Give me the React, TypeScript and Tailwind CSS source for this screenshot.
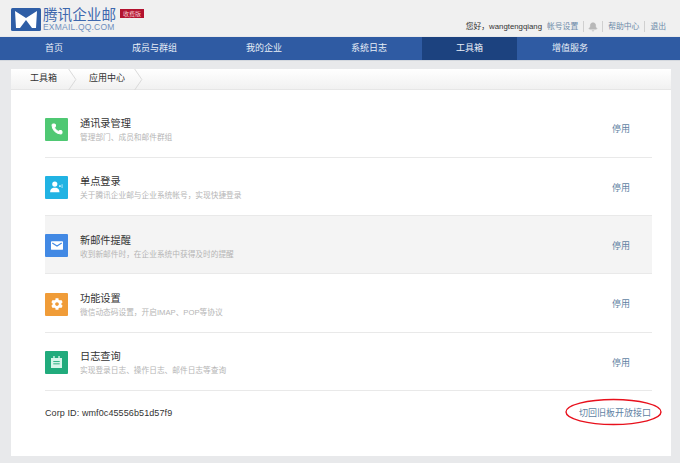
import { Bell, Phone } from "lucide-react";
import { FaCog } from "react-icons/fa";
import type { ReactNode } from "react";

const navItems = [
  { label: "首页", width: "w-[87px]", pad: "pl-[34px]" },
  { label: "成员与群组", width: "w-[114px]", pad: "pl-[34px]" },
  { label: "我的企业", width: "w-[105px]", pad: "pl-[34px]" },
  { label: "系统日志", width: "w-[105px]", pad: "pl-[34px]" },
  { label: "工具箱", width: "w-[95px]", pad: "pl-[34px]", active: true },
  { label: "增值服务", width: "w-[105px]", pad: "pl-[35px]" },
];

const tools: { title: string; desc: string; color: string; highlight?: boolean; icon: ReactNode }[] = [
  {
    title: "通讯录管理",
    desc: "管理部门、成员和邮件群组",
    color: "bg-[#4fc873]",
    icon: <Phone className="h-[12px] w-[12px] fill-white text-white" />,
  },
  {
    title: "单点登录",
    desc: "关于腾讯企业邮与企业系统帐号，实现快捷登录",
    color: "bg-[#21b3e3]",
    icon: (
      <svg viewBox="0 0 16 14" className="h-[12px] w-[15px]" fill="white">
        <circle cx="6" cy="3.6" r="3" />
        <path d="M0.5 13c0-3 2-4.5 3.8-5h3.4c1.8.5 3.8 2 3.8 5z" />
        <path d="M11 5h2v2h-2zM14 3.8h1v4.4h-1z" opacity="0.75" />
      </svg>
    ),
  },
  {
    title: "新邮件提醒",
    desc: "收到新邮件时，在企业系统中获得及时的提醒",
    color: "bg-[#4289e4]",
    highlight: true,
    icon: (
      <svg viewBox="0 0 14 10" className="h-[9px] w-[12px]">
        <rect width="14" height="10" rx="1" fill="white" />
        <path d="M1.5 2l5.5 3.6L12.500 2" fill="none" stroke="#4289e4" strokeWidth="1.300" />
      </svg>
    ),
  },
  {
    title: "功能设置",
    desc: "微信动态码设置，开启IMAP、POP等协议",
    color: "bg-[#f09c38]",
    icon: <FaCog className="h-[12px] w-[12px] text-white" />,
  },
  {
    title: "日志查询",
    desc: "实现登录日志、操作日志、邮件日志等查询",
    color: "bg-[#21ab7c]",
    icon: (
      <svg viewBox="0 0 12 13" className="h-[12px] w-[11px]">
        <path d="M0 2h2.500V0h1.500v2h4V0h1.500v2H12v11H0z" fill="#d8f5ea" />
        <path d="M2.500 6h7M2.500 8.500h7" stroke="#21ab7c" strokeWidth="1" />
      </svg>
    ),
  },
];

function Chevron() {
  return (
    <svg viewBox="0 0 9 22" className="h-[21px] w-[9px] shrink-0" fill="none">
      <path d="M0.500 0L8 11L0.500 22" stroke="#d8d8d8" />
    </svg>
  );
}

function Logo() {
  return (
    <svg viewBox="0 0 30 23" className="h-[23px] w-[30px] shrink-0">
      <rect width="30" height="23" rx="1.500" fill="#2f5ea6" />
      <path d="M4 3L15 10L26 3L25 20L21 20L15 12L9 20L5 20Z" fill="white" />
    </svg>
  );
}

function TopLink({ children }: { children: ReactNode }) {
  return <a className="text-[#6d8aa8]">{children}</a>;
}

function Sep() {
  return <span className="mx-[5px] block h-[11px] w-px bg-[#d0d0d0]" />;
}

export default function App() {
  return (
    <div
      className="h-[463px] w-[680px] overflow-hidden bg-[#e8e9eb]"
      style={{ fontFamily: '"Liberation Sans", "Noto Sans CJK SC", sans-serif' }}
    >
      <header className="flex h-[36px] items-start justify-between bg-[#f0f0f0] pl-[11px] pr-[14px]">
        <div className="flex items-start pt-[8px]">
          <Logo />
          <div className="ml-[2px] flex w-[75px] flex-col">
            <span className="text-[14.600px] leading-[15px] text-[#3d67ad]">腾讯企业邮</span>
            <span className="text-[8.500px] leading-[9px] tracking-[0.2px] text-[#6f8fbe]">EXMAIL.QQ.COM</span>
          </div>
          <span className="ml-[2px] mt-[1px] flex h-[9px] w-[24px] items-center justify-center bg-[#b3122f] text-[6px] leading-none text-[#f3c9cf]">
            收费版
          </span>
        </div>
        <div className="mt-[21px] flex items-center text-[7.800px] leading-none text-[#333333]">
          <span className="mr-[5px]">您好，wangtengqiang</span>
          <TopLink>帐号设置</TopLink>
          <Sep />
          <Bell className="-mx-px h-[10px] w-[10px] fill-[#b8b8b8] text-[#b8b8b8]" />
          <Sep />
          <TopLink>帮助中心</TopLink>
          <Sep />
          <TopLink>退出</TopLink>
        </div>
      </header>

      <nav className="mt-px flex h-[24px] border-b border-[#d4d8de] bg-[#2f5ba3] pl-[11px] text-[9px] text-[#e8eef7]">
        {navItems.map((item) => (
          <a
            key={item.label}
            className={`flex h-full items-center ${item.width} ${item.pad} ${item.active ? "bg-[#1c427f]" : ""}`}
          >
            {item.label}
          </a>
        ))}
      </nav>

      <main className="mx-[11px] mt-[8px] h-[387px] w-[660px] bg-white">
        <div className="flex h-[21px] items-center border-b border-[#e6e6e6] bg-gradient-to-b from-white to-[#f1f1f1] text-[9px] text-[#333333]">
          <span className="ml-[19px] w-[38px]">工具箱</span>
          <Chevron />
          <span className="ml-[12px] w-[36px]">应用中心</span>
          <span className="ml-[9px]"><Chevron /></span>
        </div>

        <div className="ml-[34px] mr-[19px] mt-[9.500px]">
          {tools.map((tool) => (
            <div
              key={tool.title}
              className={`flex h-[58.300px] items-center border-b border-[#e9e9e9] pt-[2px] ${tool.highlight ? "bg-[#f4f4f4]" : ""}`}
            >
              <div className={`flex h-[23px] w-[23px] shrink-0 items-center justify-center rounded-[1px] ${tool.color}`}>
                {tool.icon}
              </div>
              <div className="ml-[12px] mt-[2px] flex flex-1 flex-col">
                <span className="text-[10.200px] leading-[14px] text-[#333333]">{tool.title}</span>
                <span className="mt-[1px] text-[7.700px] leading-[11px] text-[#b5b5b5]">{tool.desc}</span>
              </div>
              <a className="mr-[22px] mt-[2px] text-[9px] text-[#5e7fa3]">停用</a>
            </div>
          ))}
          <div className="flex h-[44px] items-center justify-between pt-[2px]">
            <span className="text-[9px] tracking-[0.1px] text-[#333333]">Corp ID: wmf0c45556b51d57f9</span>
            <a className="relative mr-px text-[9px] text-[#5e7fa3]">
              切回旧板开放接口
              <svg viewBox="0 0 97 28" className="absolute left-[-14px] top-[-9px] h-[28px] w-[97px]" fill="none">
                <ellipse cx="48.500" cy="14" rx="47.500" ry="12.500" stroke="#e8101c" strokeWidth="1.400" />
              </svg>
            </a>
          </div>
        </div>
      </main>
    </div>
  );
}
